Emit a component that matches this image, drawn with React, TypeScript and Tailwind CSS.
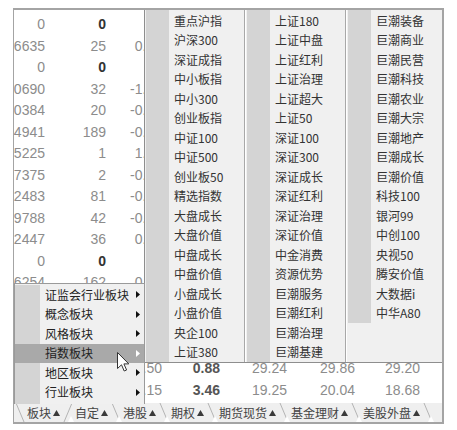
import React from "react";

type TopRow = { a: string; b: string; bBold?: boolean; c?: string };
type BottomRow = { c: string; d: string; e: string; f: string; g: string };

const topRows: TopRow[] = [
  { a: "0", b: "0", bBold: true },
  { a: "106635", b: "25", c: "0.35" },
  { a: "0", b: "0", bBold: true },
  { a: "110690", b: "32", c: "-1.25" },
  { a: "120384", b: "20", c: "-0.60" },
  { a: "154941", b: "189", c: "-0.30" },
  { a: "5225", b: "1", c: "1.00" },
  { a: "157375", b: "2", c: "-0.50" },
  { a: "152483", b: "81", c: "-0.43" },
  { a: "179788", b: "42", c: "-0.29" },
  { a: "152447", b: "36", c: "0.61" },
  { a: "0", b: "0", bBold: true },
  { a: "156254", b: "162", c: "0.55" },
];

const bottomRows: BottomRow[] = [
  { c: "0.50", d: "0.88", e: "29.24", f: "29.86", g: "29.20" },
  { c: "0.15", d: "3.46", e: "19.25", f: "20.04", g: "18.68" },
];

const col1 = [
  "重点沪指", "沪深300", "深证成指", "中小板指", "中小300", "创业板指", "中证100", "中证500", "创业板50",
  "精选指数", "大盘成长", "大盘价值", "中盘成长", "中盘价值", "小盘成长", "小盘价值", "央企100", "上证380",
];
const col2 = [
  "上证180", "上证中盘", "上证红利", "上证治理", "上证超大", "上证50", "深证100", "深证300", "深证成长",
  "深证红利", "深证治理", "深证价值", "中金消费", "资源优势", "巨潮服务", "巨潮红利", "巨潮治理", "巨潮基建",
];
const col3 = [
  "巨潮装备", "巨潮商业", "巨潮民营", "巨潮科技", "巨潮农业", "巨潮大宗", "巨潮地产", "巨潮成长",
  "巨潮价值", "科技100", "银河99", "中创100", "央视50", "腾安价值", "大数据i", "中华A80",
];

const ctxItems = ["证监会行业板块", "概念板块", "风格板块", "指数板块", "地区板块", "行业板块"];

const tabs = ["板块", "自定", "港股", "期权", "期货现货", "基金理财", "美股外盘"];

function TopDataRow({ r }: { r: TopRow }) {
  return (
    <div className="flex h-[21.5px] shrink-0 items-center whitespace-nowrap">
      <div className="flex w-[31px] shrink-0 justify-end overflow-hidden">
        <span className="shrink-0">{r.a}</span>
      </div>
      <div className={r.bBold ? "w-[61px] shrink-0 text-right font-bold text-[#333]" : "w-[61px] shrink-0 text-right"}>
        {r.b}
      </div>
      <div className="w-[38px] shrink-0 overflow-hidden">
        <div className="w-[56px] text-right">{r.c}</div>
      </div>
    </div>
  );
}

function BottomDataRow({ r }: { r: BottomRow }) {
  return (
    <div className="flex h-[21.5px] shrink-0 items-center whitespace-nowrap">
      <div className="w-[130px] shrink-0" />
      <div className="flex w-[18px] shrink-0 justify-end overflow-hidden">
        <div className="w-[56px] shrink-0 text-right">{r.c}</div>
      </div>
      <div className="w-[58px] shrink-0 text-right font-bold text-[#555]">{r.d}</div>
      <div className="w-[67px] shrink-0 text-right">{r.e}</div>
      <div className="w-[68px] shrink-0 text-right">{r.f}</div>
      <div className="w-[65px] shrink-0 text-right">{r.g}</div>
    </div>
  );
}

function MenuColumn({ items, fullStrip, last }: { items: string[]; fullStrip: boolean; last?: boolean }) {
  return (
    <div className={last ? "flex h-full flex-1" : "flex h-full w-[101px] shrink-0"}>
      <div className="w-[1px] shrink-0" />
      <div className={fullStrip ? "h-full w-[23px] shrink-0 bg-[#d4d4d4]" : "h-[313px] w-[23px] shrink-0 bg-[#d4d4d4]"} />
      <div className="flex flex-1 flex-col pl-[5px] pt-[1px]">
        {items.map((t) => (
          <div key={t} className="flex h-[19.5px] shrink-0 items-center whitespace-nowrap leading-none">
            {t}
          </div>
        ))}
      </div>
      {!last && (
        <>
          <div className="h-full w-[1px] shrink-0 bg-[#a8a8a8]" />
          <div className="h-full w-[1px] shrink-0 bg-white" />
        </>
      )}
    </div>
  );
}

function Arrow({ white }: { white?: boolean }) {
  return (
    <svg width="4" height="7" viewBox="0 0 4 7" className="shrink-0">
      <path d="M0 0 L4 3.5 L0 7 Z" fill={white ? "#ffffff" : "#111111"} />
    </svg>
  );
}

function TabTri() {
  return (
    <svg width="7" height="6" viewBox="0 0 7 6" className="ml-[2px] shrink-0">
      <path d="M0 6 L3.5 0 L7 6 Z" fill="#3a3a3a" />
    </svg>
  );
}

function Sep({ dir, first }: { dir: "back" | "fwd"; first?: boolean }) {
  return (
    <svg width={first ? 13 : 15} height="19" viewBox={first ? "0 0 13 19" : "0 0 15 19"} className="shrink-0">
      {dir === "back" ? (
        <path d={first ? "M2 0 L10 19" : "M4 0 L12 19"} stroke="#b4b4b4" strokeWidth="1" fill="none" />
      ) : (
        <path d="M12 0 L4 19" stroke="#b4b4b4" strokeWidth="1" fill="none" />
      )}
      {!first && <path d="M8 19 L11 13 L14 19 Z" fill="#ffffff" />}
    </svg>
  );
}

export default function App() {
  return (
    <div className="relative h-[430px] w-[457px] overflow-hidden bg-white">
      <div className="ml-[13px] mt-[8px] flex h-[416px] w-[431px] flex-col border-b-2 border-l border-r-2 border-t-2 border-[#a4a4a4] bg-white">
        <div className="flex h-[393px] flex-col overflow-hidden pt-[4px] font-['Liberation_Sans',sans-serif] text-[14px] text-[#8c8c8c]">
          {topRows.map((r, i) => (
            <TopDataRow key={i} r={r} />
          ))}
          <div className="h-[64.5px] shrink-0" />
          {bottomRows.map((r, i) => (
            <BottomDataRow key={i} r={r} />
          ))}
        </div>
        <div className="flex h-[19px] items-center overflow-hidden whitespace-nowrap bg-[#efefef] font-['Noto_Sans_CJK_SC',sans-serif] text-[12px] leading-none text-[#444]">
          <Sep dir="back" first />
          {tabs.map((t, i) => (
            <React.Fragment key={t}>
              <div className="flex shrink-0 items-center">
                <span>{t}</span>
                <TabTri />
              </div>
              <Sep dir={i === 0 ? "fwd" : "back"} />
            </React.Fragment>
          ))}
        </div>
      </div>

      {/* Sub menu (3 columns) */}
      <div className="absolute left-[144px] top-[10px] flex h-[353px] w-[298px] border-b border-l border-[#8e8e8e] bg-[#f0f0f0] font-['Noto_Sans_CJK_SC',sans-serif] text-[12px] text-[#333]">
        <MenuColumn items={col1} fullStrip />
        <MenuColumn items={col2} fullStrip />
        <MenuColumn items={col3} fullStrip={false} last />
      </div>

      {/* Context menu */}
      <div className="absolute left-[14px] top-[283px] flex h-[121px] w-[131px] flex-col border-l border-r border-t border-[#9a9a9a] bg-[#f0f0f0] pt-[1px] font-['Noto_Sans_CJK_SC',sans-serif] text-[12px] text-[#222]">
        {ctxItems.map((t, i) => {
          const active = i === 3;
          return (
            <div
              key={t}
              className={
                active
                  ? "flex h-[19.5px] shrink-0 items-center bg-[#a9a9a9] leading-none"
                  : "flex h-[19.5px] shrink-0 items-center leading-none"
              }
            >
              <div className={active ? "h-full w-[25px] shrink-0 bg-[#a9a9a9]" : "h-full w-[25px] shrink-0 bg-[#d4d4d4]"} />
              <div className="ml-[5px] flex-1 whitespace-nowrap">{t}</div>
              <div className="mr-[4px]">
                <Arrow white={active} />
              </div>
            </div>
          );
        })}
        <div className="flex-1">
          <div className="h-full w-[25px] bg-[#d4d4d4]" />
        </div>
      </div>

      {/* Mouse cursor */}
      <svg className="absolute left-[117px] top-[352px]" width="13" height="20" viewBox="0 0 13 20">
        <path
          d="M0.5 0.5 L0.5 16.5 L4.5 12.8 L7.2 19 L9.6 18 L6.9 11.9 L11.8 11.9 Z"
          fill="#ffffff"
          stroke="#333333"
          strokeWidth="1"
          strokeLinejoin="round"
        />
      </svg>
    </div>
  );
}
